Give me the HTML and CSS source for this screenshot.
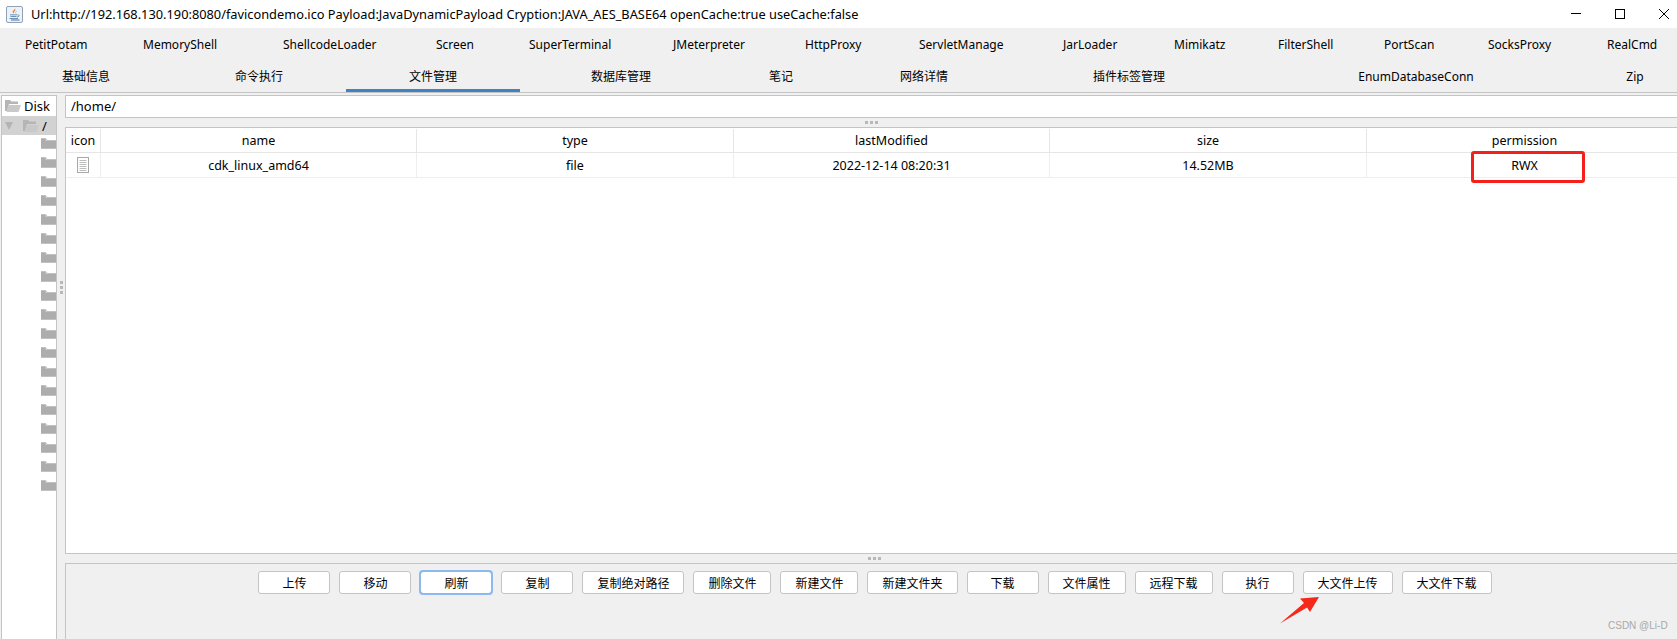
FILE: index.html
```html
<!DOCTYPE html>
<html lang="en">
<head>
    <meta charset="utf-8">
    <title>Url:http://192.168.130.190:8080/favicondemo.ico</title>
    <link rel="stylesheet" href="styles.css">
</head>
<body>
    <svg class="defs" width="0" height="0">
        <symbol id="folder-closed" viewBox="0 0 16 11">
            <path d="M0 0H5L7 2H16V11H0Z" fill="#adadad"/>
            <path d="M5 0.500L7 2.500H5Z" fill="#e2e2e2"/>
        </symbol>
        <symbol id="folder-open" viewBox="0 0 16 12">
            <path d="M0 0H5L6.500 1.500H13V4H4L2 11H0Z" fill="#b5b5b5"/>
            <path d="M3.500 5H16L13.500 12H1.500Z" fill="#c9c9c9"/>
        </symbol>
    </svg>

    <div class="titlebar">
        <svg class="app-icon" width="17" height="17" viewBox="0 0 17 17">
            <rect x="0.500" y="0.500" width="16" height="16" rx="1.500" fill="#eef2f7" stroke="#8ea3ba"/>
            <path d="M9 2.500C10.500 4.500 7 5.500 8 7.500C6 6.500 6.500 5 7.500 4.500C8.200 4 8.800 3.300 9 2.500Z" fill="#e8791f"/>
            <path d="M10.500 5C10.800 6 9.500 6.500 9.500 7.500C9 6.500 9.800 5.800 10.500 5Z" fill="#e8791f"/>
            <path d="M4 8.500H11V9.300H4ZM4.500 10.200H10.500V11H4.500ZM3.500 12H12V12.800H3.500ZM5 13.600H13.500V14.400H5Z" fill="#44709e"/>
            <path d="M11.500 8.800C13.500 8.500 13.500 10.800 11 11" fill="none" stroke="#44709e" stroke-width="0.800"/>
        </svg>
        <span class="window-title">Url:http://192.168.130.190:8080/favicondemo.ico Payload:JavaDynamicPayload Cryption:JAVA_AES_BASE64 openCache:true useCache:false</span>
        <div class="window-controls">
            <svg width="10" height="10" viewBox="0 0 10 10"><path d="M0 4.500H10" stroke="#000"/></svg>
            <svg width="10" height="10" viewBox="0 0 10 10"><rect x="0.500" y="0.500" width="9" height="9" fill="none" stroke="#000"/></svg>
            <svg width="10" height="10" viewBox="0 0 10 10"><path d="M0 0L10 10M10 0L0 10" stroke="#000"/></svg>
        </div>
    </div>

    <div class="tabs tabs-tools">
        <div class="tab">PetitPotam</div>
        <div class="tab">MemoryShell</div>
        <div class="tab">ShellcodeLoader</div>
        <div class="tab">Screen</div>
        <div class="tab">SuperTerminal</div>
        <div class="tab">JMeterpreter</div>
        <div class="tab">HttpProxy</div>
        <div class="tab">ServletManage</div>
        <div class="tab">JarLoader</div>
        <div class="tab">Mimikatz</div>
        <div class="tab">FilterShell</div>
        <div class="tab">PortScan</div>
        <div class="tab">SocksProxy</div>
        <div class="tab">RealCmd</div>
    </div>
    <div class="tabs tabs-main">
        <div class="tab">基础信息</div>
        <div class="tab">命令执行</div>
        <div class="tab selected">文件管理</div>
        <div class="tab">数据库管理</div>
        <div class="tab">笔记</div>
        <div class="tab">网络详情</div>
        <div class="tab">插件标签管理</div>
        <div class="tab">EnumDatabaseConn</div>
        <div class="tab">Zip</div>
    </div>

    <div class="workspace">
        <div class="tree">
            <div class="tree-row tree-root">
                <svg class="tree-icon" width="16" height="12"><use href="#folder-open"/></svg>
                <span>Disk</span>
            </div>
            <div class="tree-row tree-current">
                <span class="tree-arrow"></span>
                <svg class="tree-icon" width="16" height="12"><use href="#folder-open"/></svg>
                <span>/</span>
            </div>
            <div class="tree-row tree-child"><svg width="16" height="11"><use href="#folder-closed"/></svg></div>
            <div class="tree-row tree-child"><svg width="16" height="11"><use href="#folder-closed"/></svg></div>
            <div class="tree-row tree-child"><svg width="16" height="11"><use href="#folder-closed"/></svg></div>
            <div class="tree-row tree-child"><svg width="16" height="11"><use href="#folder-closed"/></svg></div>
            <div class="tree-row tree-child"><svg width="16" height="11"><use href="#folder-closed"/></svg></div>
            <div class="tree-row tree-child"><svg width="16" height="11"><use href="#folder-closed"/></svg></div>
            <div class="tree-row tree-child"><svg width="16" height="11"><use href="#folder-closed"/></svg></div>
            <div class="tree-row tree-child"><svg width="16" height="11"><use href="#folder-closed"/></svg></div>
            <div class="tree-row tree-child"><svg width="16" height="11"><use href="#folder-closed"/></svg></div>
            <div class="tree-row tree-child"><svg width="16" height="11"><use href="#folder-closed"/></svg></div>
            <div class="tree-row tree-child"><svg width="16" height="11"><use href="#folder-closed"/></svg></div>
            <div class="tree-row tree-child"><svg width="16" height="11"><use href="#folder-closed"/></svg></div>
            <div class="tree-row tree-child"><svg width="16" height="11"><use href="#folder-closed"/></svg></div>
            <div class="tree-row tree-child"><svg width="16" height="11"><use href="#folder-closed"/></svg></div>
            <div class="tree-row tree-child"><svg width="16" height="11"><use href="#folder-closed"/></svg></div>
            <div class="tree-row tree-child"><svg width="16" height="11"><use href="#folder-closed"/></svg></div>
            <div class="tree-row tree-child"><svg width="16" height="11"><use href="#folder-closed"/></svg></div>
            <div class="tree-row tree-child"><svg width="16" height="11"><use href="#folder-closed"/></svg></div>
            <div class="tree-row tree-child"><svg width="16" height="11"><use href="#folder-closed"/></svg></div>
        </div>

        <div class="splitter-v">
            <span class="dot"></span><span class="dot"></span><span class="dot"></span>
        </div>

        <div class="content">
            <div class="path-field">/home/</div>

            <div class="splitter-h splitter-top">
                <span class="dot"></span><span class="dot"></span><span class="dot"></span>
            </div>

            <div class="file-table">
                <div class="table-grid">
                    <div class="cell head">icon</div>
                    <div class="cell head">name</div>
                    <div class="cell head">type</div>
                    <div class="cell head">lastModified</div>
                    <div class="cell head">size</div>
                    <div class="cell head">permission</div>

                    <div class="cell row">
                        <svg width="12" height="16" viewBox="0 0 12 16">
                            <rect x="0.500" y="0.500" width="11" height="15" fill="#fff" stroke="#a8a8a8"/>
                            <path d="M2.500 3.500H9.500M2.500 5.500H9.500M2.500 7.500H9.500M2.500 9.500H9.500M2.500 11.500H9.500M2.500 13.500H9.500" stroke="#bdbdbd"/>
                        </svg>
                    </div>
                    <div class="cell row">cdk_linux_amd64</div>
                    <div class="cell row">file</div>
                    <div class="cell row">2022-12-14 08:20:31</div>
                    <div class="cell row">14.52MB</div>
                    <div class="cell row">RWX</div>
                </div>
                <div class="red-box"></div>
            </div>

            <div class="splitter-h splitter-bottom">
                <span class="dot"></span><span class="dot"></span><span class="dot"></span>
            </div>

            <div class="actions">
                <button>上传</button>
                <button>移动</button>
                <button class="focused">刷新</button>
                <button>复制</button>
                <button>复制绝对路径</button>
                <button>删除文件</button>
                <button>新建文件</button>
                <button>新建文件夹</button>
                <button>下载</button>
                <button>文件属性</button>
                <button>远程下载</button>
                <button>执行</button>
                <button>大文件上传</button>
                <button>大文件下载</button>
            </div>
        </div>
    </div>

    <svg class="red-arrow" width="44" height="32" viewBox="0 0 44 32">
        <path d="M42 1L23 2.500L27 7L3 27.500L30 11.500L33 16Z" fill="#f5281c"/>
    </svg>
    <div class="watermark">CSDN @Li-D</div>
</body>
</html>
```

FILE: styles.css
```css
html, body {
    margin: 0;
    padding: 0;
}

body {
    position: relative;
    display: flex;
    flex-direction: column;
    width: 1677px;
    height: 639px;
    overflow: hidden;
    background-color: #f0f0f0;
    color: #000;
    font-family: "Noto Sans", "Noto Sans CJK SC", sans-serif;
    font-size: 12px;
}

.defs {
    position: absolute;
}

.titlebar {
    display: flex;
    align-items: center;
    height: 28px;
    flex: none;
    padding-left: 6px;
    background-color: #fff;
}

.app-icon {
    margin-right: 8px;
}

.window-title {
    white-space: nowrap;
    font-size: 12.8px;
}

.window-controls {
    display: flex;
    gap: 34px;
    margin-left: auto;
    padding-right: 8px;
}

.tabs {
    flex: none;
    white-space: nowrap;
}

.tabs-tools {
    display: grid;
    grid-template-columns: 118px 140px 153px 93px 144px 132px 114px 144px 111px 104px 106px 104px 119px auto;
    height: 32px;
    line-height: 34px;
    padding-left: 25px;
}

.tabs-main {
    display: grid;
    grid-template-columns: 172px 174px 174px 202px 118px 168px 242px 332px 95px;
    height: 33px;
    line-height: 33px;
    box-sizing: border-box;
    border-bottom: 1px solid #c4c4c4;
    text-align: center;
}

.tabs-main .tab {
    height: 32px;
}

.tabs-main .tab:last-child {
    padding-left: 11px;
}

.tabs-main .selected {
    box-sizing: border-box;
    border-bottom: 3px solid #4082c4;
}

.workspace {
    display: flex;
    flex: 1;
    min-height: 0;
    padding-top: 2px;
}

.tree {
    box-sizing: border-box;
    width: 56px;
    margin-left: 1px;
    overflow: hidden;
    border: 1px solid #c4c4c4;
    border-bottom: none;
    background-color: #fff;
    font-size: 13px;
}

.tree-row {
    display: flex;
    align-items: center;
    height: 19px;
}

.tree-root {
    height: 20px;
    padding-left: 3px;
}

.tree-root .tree-icon {
    margin-right: 3px;
}

.tree-current {
    background-color: #d2d2d2;
    padding-left: 3px;
}

.tree-current .tree-icon {
    margin-right: 3px;
}

.tree-arrow {
    width: 0;
    height: 0;
    margin-right: 10px;
    border-left: 4px solid transparent;
    border-right: 4px solid transparent;
    border-top: 8px solid #b4b4b4;
}

.tree-child {
    box-sizing: border-box;
    align-items: flex-start;
    padding: 3px 0 0 39px;
}

.splitter-v {
    display: flex;
    flex-direction: column;
    justify-content: center;
    align-items: center;
    gap: 2px;
    width: 8px;
    padding-bottom: 160px;
    box-sizing: border-box;
}

.dot {
    display: block;
    width: 3px;
    height: 3px;
    background-color: #b8b8b8;
}

.content {
    display: flex;
    flex-direction: column;
    flex: 1;
    min-width: 0;
}

.path-field {
    box-sizing: border-box;
    height: 23px;
    flex: none;
    padding-left: 5px;
    line-height: 21px;
    border: 1px solid #c4c4c4;
    border-right: none;
    background-color: #fff;
    font-size: 13px;
}

.splitter-h {
    display: flex;
    justify-content: center;
    align-items: center;
    gap: 2px;
    flex: none;
}

.splitter-top {
    height: 9px;
}

.splitter-bottom {
    height: 9px;
    padding-left: 6px;
}

.file-table {
    position: relative;
    flex: none;
    box-sizing: border-box;
    height: 427px;
    border: 1px solid #c4c4c4;
    border-right: none;
    background-color: #fff;
}

.table-grid {
    display: grid;
    grid-template-columns: 35px 316px 317px 316px 317px 316px;
    grid-template-rows: 24px 25px;
    padding-top: 1px;
}

.cell {
    display: flex;
    align-items: center;
    justify-content: center;
    box-sizing: border-box;
    white-space: nowrap;
    font-size: 12.5px;
}

.head {
    border-right: 1px solid #e6e6e6;
    border-bottom: 1px solid #e6e6e6;
}

.row {
    border-right: 1px solid #eeeeee;
    border-bottom: 1px solid #eeeeee;
}

.red-box {
    position: absolute;
    left: 1405px;
    top: 23px;
    box-sizing: border-box;
    width: 114px;
    height: 32px;
    border: 3px solid #f5201a;
    border-radius: 3px;
}

.actions {
    display: flex;
    flex: 1;
    gap: 9px;
    justify-content: center;
    align-items: flex-start;
    box-sizing: border-box;
    padding: 7px 0 0 7px;
    border-top: 1px solid #c4c4c4;
    border-left: 1px solid #c4c4c4;
}

.actions button {
    box-sizing: border-box;
    min-width: 72px;
    height: 23px;
    padding: 0 14px;
    border: 1px solid #c4c4c4;
    border-radius: 3px;
    background-color: #fff;
    color: #000;
    font-family: inherit;
    font-size: 12px;
    white-space: nowrap;
}

.actions button.focused {
    outline: 2px solid #8cbaee;
    outline-offset: -1px;
    border-color: #8cbaee;
}

.red-arrow {
    position: absolute;
    left: 1277px;
    top: 596px;
}

.watermark {
    position: absolute;
    left: 1608px;
    top: 619px;
    color: #a8a8a8;
    font-family: "Liberation Sans", sans-serif;
    font-size: 10px;
    line-height: 14px;
}
```
